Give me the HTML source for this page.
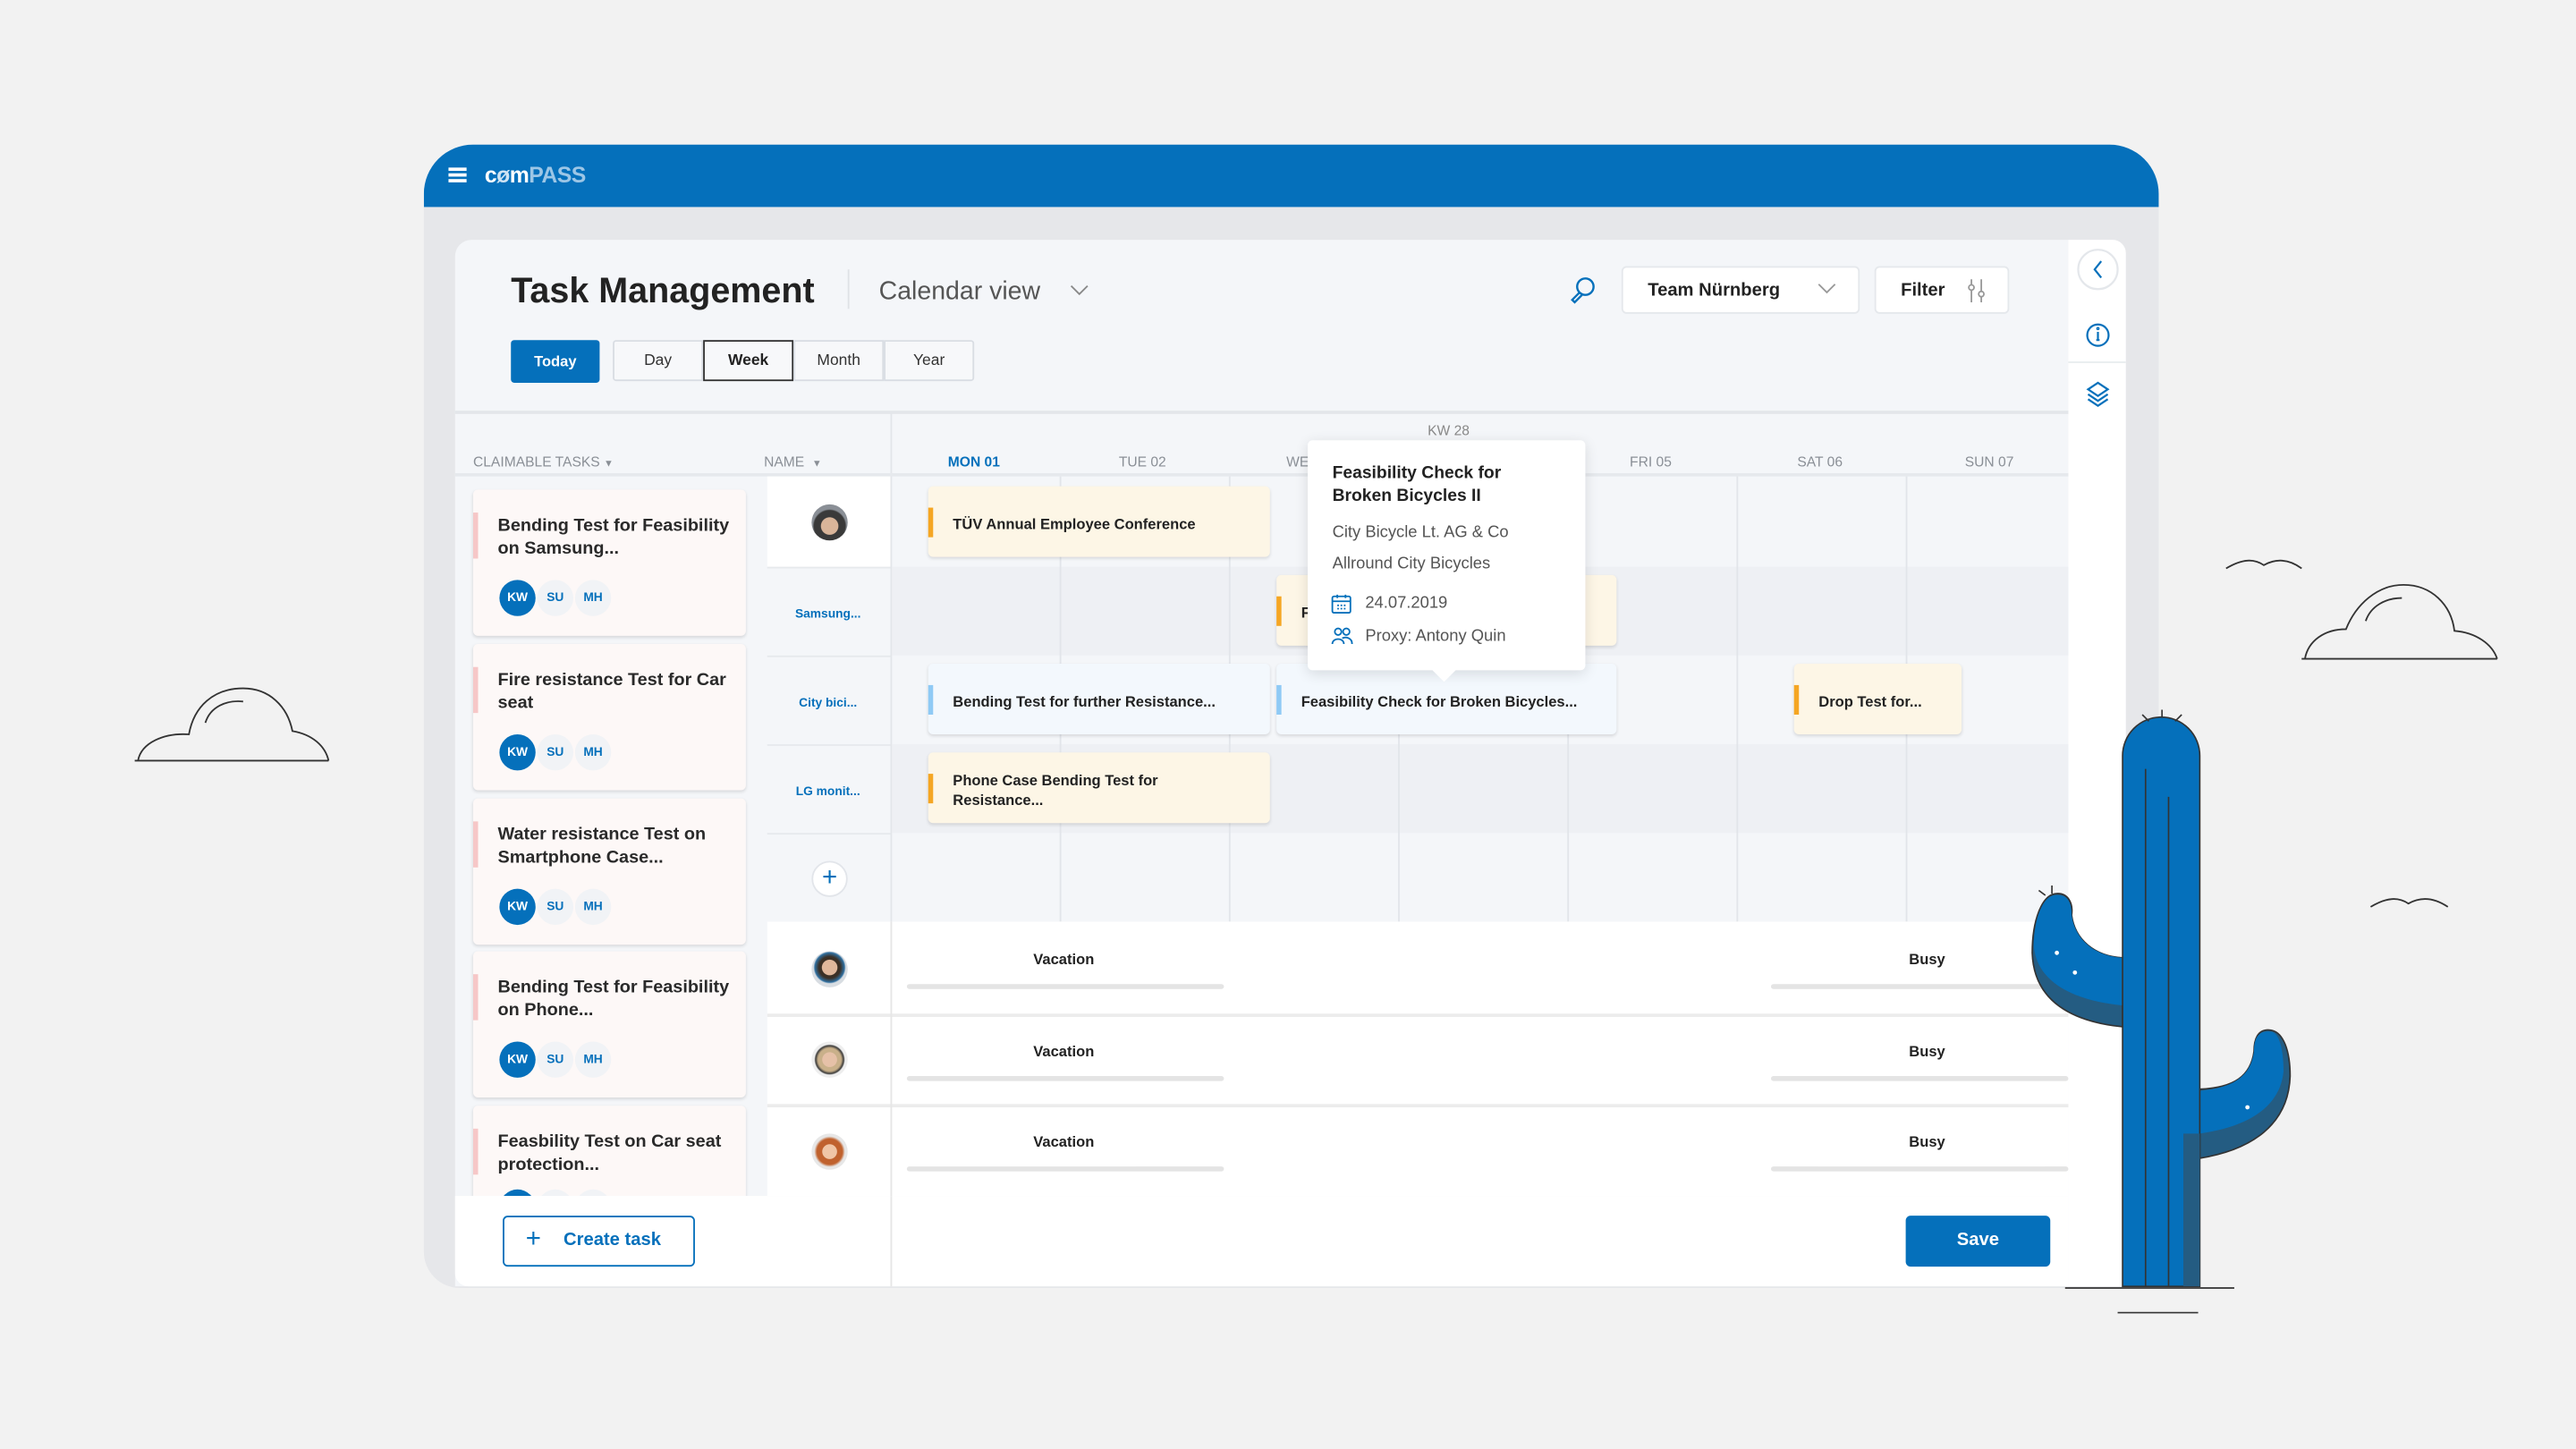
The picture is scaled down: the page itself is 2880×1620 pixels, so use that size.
<!DOCTYPE html>
<html><head><meta charset="utf-8"><style>
*{margin:0;padding:0;box-sizing:border-box}
html,body{width:2880px;height:1620px;overflow:hidden;background:#f2f2f2;font-family:"Liberation Sans",Arial,sans-serif}
#w{position:absolute;left:0;top:0;width:1568px;height:882px;transform:scale(1.836735);transform-origin:0 0}
.a{position:absolute}
.frame{left:258px;top:88px;width:1056px;height:696px;background:#e6e7ea;border-radius:30px 30px 0 22px;overflow:hidden}
.bar{left:0;top:0;width:1056px;height:38px;background:#0570bb}
.panel{left:277px;top:146px;width:982px;height:637px;background:#f4f6f9;border-radius:10px 0 0 0}
.side{left:1259px;top:146px;width:35px;height:637px;background:#fff;border-radius:0 8px 0 0}
.btn{border:1px solid #d9dde3;background:#f7f8fa;font-size:9.5px;color:#333;text-align:center;line-height:24px}
.box{background:#fff;border:1px solid #e5e8ec;border-radius:3px;font-size:11px;font-weight:bold;color:#222}
.hdr{font-size:8.5px;color:#8a8f96;top:276px}
.card{left:288px;width:166px;height:89px;background:#fdf8f7;border-radius:3px;box-shadow:0 1px 2px rgba(0,0,0,.12)}
.card .pb{position:absolute;left:0;top:14px;width:3px;height:28px;background:#f6c7c7}
.card .t{position:absolute;left:15px;top:15px;width:148px;font-size:10.8px;line-height:14px;font-weight:bold;color:#2a2a2a}
.ch{position:absolute;top:55px;width:22px;height:22px;border-radius:50%;font-size:7.5px;font-weight:bold;text-align:center;line-height:22px;color:#0570bb;background:#f1f3f6}
.ch.k{background:#0570bb;color:#fff}
.nm{font-size:7.5px;font-weight:bold;color:#0570bb;text-align:center;left:466px;width:76px}
.ev{height:43px;border-radius:3px;box-shadow:0 1px 2px rgba(0,0,0,.12);font-size:9px;font-weight:bold;color:#222}
.ev.o{background:#fdf6e6}.ev.b{background:#f3f8fd}
.ev i{position:absolute;left:0;top:13px;width:3px;height:18px}
.ev.o i{background:#f5a623}.ev.b i{background:#8fcaf5}
.ev span{position:absolute;left:15px;top:18px;white-space:nowrap}
.av{width:22px;height:22px;border-radius:50%;left:494px}
.vl{position:absolute;top:290px;width:1px;height:271px;background:#e2e5ea}
.lab{font-size:9px;font-weight:bold;color:#222}
.gb{height:3px;background:#e4e4e4;border-radius:2px}
</style></head><body>
<div id="w">
<svg class="a" style="left:0;top:0" width="1568" height="882" fill="none" stroke="#333" stroke-width="1">
<path d="M82 463 H200 M84 463 C86 452 100 446 115 447 C118 430 130 419 148 419 C164 419 175 430 178 445 C190 447 198 454 200 463"/>
<path d="M125 440 C128 430 138 426 148 427"/>
<path d="M1401 401 H1520 M1403 401 C1405 390 1415 383 1428 383 C1434 368 1447 356 1463 356 C1480 356 1492 368 1494 384 C1507 385 1517 392 1520 401"/>
<path d="M1440 378 C1443 369 1452 364 1462 364"/>
<path d="M1355 346 C1365 340 1372 340 1378 344 C1385 340 1393 340 1401 346"/>
<path d="M1443 552 C1453 546 1460 546 1466 550 C1473 546 1481 546 1490 552"/>
</svg>
<div class="a frame">
 <div class="a bar"></div>
 <div class="a" style="left:15px;top:14px;width:11px;height:1.5px;background:#fff;box-shadow:0 3.5px 0 #fff,0 7px 0 #fff"></div>
 <div class="a" style="left:37px;top:11px;font-size:13.5px;font-weight:bold;color:#fff;letter-spacing:-.3px">c<span style="color:#cfe3f3">ø</span>m<span style="color:#9cc6e6">PASS</span></div>
</div>
<div class="a panel"></div>
<div class="a side"></div>
<svg class="a" style="left:1259px;top:146px" width="35" height="120" fill="none" stroke="#0570bb" stroke-width="1.2">
<circle cx="18" cy="18" r="12" stroke="#e4e7eb" fill="#fff"/>
<path d="M20 13 L16 18 L20 23"/>
<circle cx="18" cy="58" r="6.5"/><path d="M18 56 V61 M17 61 H19"/><circle cx="18" cy="54" r=".4"/>
<path d="M12 91 L18 87 L24 91 L18 95 Z M12 94 L18 98 L24 94 M12 97 L18 101 L24 97"/>
</svg>
<div class="a" style="left:1259px;top:220px;width:35px;height:1px;background:#e9ecef"></div>
<div class="a" style="left:311px;top:165px;font-size:21.5px;font-weight:bold;color:#222">Task Management</div>
<div class="a" style="left:516px;top:164px;width:1px;height:24px;background:#dfe2e6"></div>
<div class="a" style="left:535px;top:169px;font-size:15.5px;color:#555">Calendar view</div>
<svg class="a" style="left:650px;top:172px" width="14" height="10" fill="none" stroke="#888"><path d="M2 2 L7 7 L12 2"/></svg>
<div class="a" style="left:311px;top:207px;width:54px;height:26px;background:#0570bb;border-radius:2px;color:#fff;font-size:9px;font-weight:bold;text-align:center;line-height:26px">Today</div>
<div class="a btn" style="left:373px;top:207px;width:55px;height:25px;border-radius:2px 0 0 2px">Day</div>
<div class="a btn" style="left:428px;top:207px;width:55px;height:25px;border:1.2px solid #333;font-weight:bold;color:#222">Week</div>
<div class="a btn" style="left:483px;top:207px;width:55px;height:25px">Month</div>
<div class="a btn" style="left:538px;top:207px;width:55px;height:25px;border-radius:0 2px 2px 0">Year</div>
<svg class="a" style="left:954px;top:167px" width="18" height="18" fill="none" stroke="#0570bb" stroke-width="1.3"><circle cx="11" cy="7.5" r="5"/><path d="M7.5 11 L3 15.5 L4.5 17 L9 12.5"/></svg>
<div class="a box" style="left:987px;top:162px;width:145px;height:29px;line-height:29px;padding-left:15px">Team Nürnberg</div>
<svg class="a" style="left:1105px;top:171px" width="14" height="10" fill="none" stroke="#999"><path d="M2 2 L7 7 L12 2"/></svg>
<div class="a box" style="left:1141px;top:162px;width:82px;height:29px;line-height:29px;padding-left:15px">Filter</div>
<svg class="a" style="left:1197px;top:169px" width="12" height="16" fill="none" stroke="#999"><path d="M3 1 V15 M9 1 V15"/><circle cx="3" cy="6" r="1.6" fill="#fff"/><circle cx="9" cy="10" r="1.6" fill="#fff"/></svg>
<div class="a" style="left:277px;top:250px;width:982px;height:1.5px;background:#e3e6ea"></div>
<div class="a hdr" style="left:288px">CLAIMABLE TASKS <span style="font-size:6px">▼</span></div>
<div class="a hdr" style="left:465px">NAME &nbsp;<span style="font-size:6px">▼</span></div>
<div class="a" style="left:542px;top:251px;width:1px;height:532px;background:#e3e6ea"></div>
<div class="a" style="left:869px;top:257px;font-size:8.5px;color:#888">KW 28</div>
<div class="a hdr" style="left:577px;color:#0570bb;font-weight:bold">MON 01</div>
<div class="a hdr" style="left:681px">TUE 02</div>
<div class="a hdr" style="left:783px">WE</div>
<div class="a hdr" style="left:992px">FRI 05</div>
<div class="a hdr" style="left:1094px">SAT 06</div>
<div class="a hdr" style="left:1196px">SUN 07</div>
<div class="a" style="left:277px;top:288px;width:982px;height:2px;background:#e6e9ed"></div>
<div class="a" style="left:543px;top:345px;width:716px;height:54px;background:#eef0f4"></div>
<div class="a" style="left:543px;top:453px;width:716px;height:54px;background:#eef0f4"></div>
<div class="vl" style="left:645px"></div><div class="vl" style="left:748px"></div><div class="vl" style="left:851px"></div><div class="vl" style="left:954px"></div><div class="vl" style="left:1057px"></div><div class="vl" style="left:1160px"></div>
<div class="a" style="left:467px;top:290px;width:75px;height:55px;background:#fff"></div>
<div class="a" style="left:467px;top:345px;width:75px;height:1px;background:#e6e9ed"></div>
<div class="a" style="left:467px;top:399px;width:75px;height:1px;background:#e6e9ed"></div>
<div class="a" style="left:467px;top:453px;width:75px;height:1px;background:#e6e9ed"></div>
<div class="a" style="left:467px;top:507px;width:75px;height:1px;background:#e6e9ed"></div>
<div class="a av" style="top:307px;background:radial-gradient(circle at 50% 60%,#d9b59a 0 30%,#3a3a3a 32% 55%,#8a8f96 60%)"></div>
<div class="a nm" style="top:369px">Samsung...</div>
<div class="a nm" style="top:423px">City bici...</div>
<div class="a nm" style="top:477px">LG monit...</div>
<div class="a" style="left:494px;top:524px;width:22px;height:22px;border-radius:50%;background:#fff;border:1px solid #e2e5ea;color:#0570bb;font-size:16px;line-height:19px;text-align:center">+</div>
<div class="a" style="left:467px;top:561px;width:792px;height:167px;background:#fff"></div>
<div class="a" style="left:467px;top:617px;width:792px;height:1.5px;background:#ececec"></div>
<div class="a" style="left:467px;top:672px;width:792px;height:1.5px;background:#ececec"></div>
<div class="a" style="left:542px;top:561px;width:1px;height:222px;background:#e6e6e6"></div>
<div class="a av" style="top:579px;background:radial-gradient(circle at 50% 45%,#e0b89c 0 28%,#3b3026 30% 40%,#2f6fa0 55%,#d8dde2 60%)"></div>
<div class="a av" style="top:634px;background:radial-gradient(circle at 50% 50%,#e6c1a8 0 28%,#c9b08a 30% 45%,#3a3a3a 55%,#eee 60%)"></div>
<div class="a av" style="top:690px;background:radial-gradient(circle at 50% 50%,#f0c6a6 0 28%,#c0622e 30% 50%,#e7e7e7 60%)"></div>
<div class="a lab" style="left:629px;top:579px">Vacation</div>
<div class="a lab" style="left:629px;top:635px">Vacation</div>
<div class="a lab" style="left:629px;top:690px">Vacation</div>
<div class="a lab" style="left:1162px;top:579px">Busy</div>
<div class="a lab" style="left:1162px;top:635px">Busy</div>
<div class="a lab" style="left:1162px;top:690px">Busy</div>
<div class="a gb" style="left:552px;top:599px;width:193px"></div>
<div class="a gb" style="left:552px;top:655px;width:193px"></div>
<div class="a gb" style="left:552px;top:710px;width:193px"></div>
<div class="a gb" style="left:1078px;top:599px;width:181px"></div>
<div class="a gb" style="left:1078px;top:655px;width:181px"></div>
<div class="a gb" style="left:1078px;top:710px;width:181px"></div>
<div class="a" style="left:277px;top:290px;width:190px;height:438px;overflow:hidden">
<div class="card a" style="left:11px;top:8px"><i class="pb"></i><div class="t">Bending Test for Feasibility on Samsung...</div><b class="ch k" style="left:16px">KW</b><b class="ch" style="left:39px">SU</b><b class="ch" style="left:62px">MH</b></div>
<div class="card a" style="left:11px;top:102px"><i class="pb"></i><div class="t">Fire resistance Test for Car seat</div><b class="ch k" style="left:16px">KW</b><b class="ch" style="left:39px">SU</b><b class="ch" style="left:62px">MH</b></div>
<div class="card a" style="left:11px;top:196px"><i class="pb"></i><div class="t">Water resistance Test on Smartphone Case...</div><b class="ch k" style="left:16px">KW</b><b class="ch" style="left:39px">SU</b><b class="ch" style="left:62px">MH</b></div>
<div class="card a" style="left:11px;top:289px"><i class="pb"></i><div class="t">Bending Test for Feasibility on Phone...</div><b class="ch k" style="left:16px">KW</b><b class="ch" style="left:39px">SU</b><b class="ch" style="left:62px">MH</b></div>
<div class="card a" style="left:11px;top:383px"><i class="pb"></i><div class="t">Feasbility Test on Car seat protection...</div><b class="ch k" style="left:16px;top:51px">KW</b><b class="ch" style="left:39px;top:51px">SU</b><b class="ch" style="left:62px;top:51px">MH</b></div>
</div>
<div class="a ev o" style="left:565px;top:296px;width:208px"><i></i><span>TÜV Annual Employee Conference</span></div>
<div class="a ev o" style="left:777px;top:350px;width:207px"><i></i><span>F</span></div>
<div class="a ev b" style="left:565px;top:404px;width:208px"><i></i><span>Bending Test for further Resistance...</span></div>
<div class="a ev b" style="left:777px;top:404px;width:207px"><i></i><span>Feasibility Check for Broken Bicycles...</span></div>
<div class="a ev o" style="left:1092px;top:404px;width:102px"><i></i><span>Drop Test for...</span></div>
<div class="a ev o" style="left:565px;top:458px;width:208px"><i></i><span style="top:11px;line-height:12px">Phone Case Bending Test for<br>Resistance...</span></div>
<div class="a" style="left:796px;top:268px;width:169px;height:140px;background:#fff;border-radius:3px;box-shadow:0 2px 8px rgba(0,0,0,.12)">
 <div class="a" style="left:78px;top:135px;width:10px;height:10px;background:#fff;transform:rotate(45deg)"></div>
 <div class="a" style="left:15px;top:13px;font-size:10.5px;font-weight:bold;color:#222;line-height:14px">Feasibility Check for<br>Broken Bicycles II</div>
 <div class="a" style="left:15px;top:51px;font-size:10px;color:#555">City Bicycle Lt. AG &amp; Co</div>
 <div class="a" style="left:15px;top:70px;font-size:10px;color:#555">Allround City Bicycles</div>
 <svg class="a" style="left:14px;top:93px" width="13" height="13" fill="none" stroke="#0570bb"><rect x="1" y="2" width="11" height="10" rx="1"/><path d="M1 5 H12 M4 1 V3 M9 1 V3"/><path d="M4 7.5h1M6 7.5h1M8 7.5h1M4 9.5h1M6 9.5h1M8 9.5h1" /></svg>
 <div class="a" style="left:35px;top:94px;font-size:10px;color:#555">24.07.2019</div>
 <svg class="a" style="left:14px;top:113px" width="14" height="12" fill="none" stroke="#0570bb"><circle cx="4.5" cy="3.5" r="2"/><circle cx="9.5" cy="3.5" r="2"/><path d="M1 11 C1 7 8 7 8 11 M7 7.5 C9 6.5 13 7 13 11"/></svg>
 <div class="a" style="left:35px;top:114px;font-size:10px;color:#555">Proxy: Antony Quin</div>
</div>
<div class="a" style="left:277px;top:728px;width:982px;height:55px;background:#fff;border-radius:0 0 0 8px"></div>
<div class="a" style="left:542px;top:728px;width:1px;height:55px;background:#e6e6e6"></div>
<div class="a" style="left:306px;top:740px;width:117px;height:31px;border:1.3px solid #0570bb;border-radius:3px;color:#0570bb;font-size:11px;font-weight:bold;line-height:29px;padding-left:36px">Create task</div>
<div class="a" style="left:320px;top:746px;color:#0570bb;font-size:16px;line-height:18px">+</div>
<div class="a" style="left:1160px;top:740px;width:88px;height:31px;background:#0570bb;border-radius:3px;color:#fff;font-size:11px;font-weight:bold;text-align:center;line-height:31px">Save</div>
<!-- cactus -->
<svg class="a" style="left:0;top:0" width="1568" height="882" stroke="#333" stroke-width="0.9">
<path d="M1237 580 C1237 560 1243 545 1251 544 C1259 543 1262 550 1261 557 C1263 572 1275 582 1292 583 V625 C1262 622 1238 610 1237 580 Z" fill="#245c82"/>
<path d="M1238 576 C1238 558 1244 545 1251 545 C1259 544 1261 550 1261 557 C1263 572 1275 582 1292 583 V612 C1262 609 1240 598 1238 576 Z" fill="#0570bb" stroke="none"/>
<path d="M1394 655 C1394 640 1390 628 1382 627 C1374 626 1372 633 1372 640 C1370 655 1360 662 1339 663 V705 C1370 700 1393 685 1394 655 Z" fill="#245c82"/>
<path d="M1390 652 C1390 638 1387 628 1382 628 C1374 627 1372 633 1372 640 C1370 655 1360 662 1339 664 V690 C1368 686 1388 674 1390 652 Z" fill="#0570bb" stroke="none"/>
<path d="M1292 783 V460 A23.5 23.5 0 0 1 1339 460 V783 Z" fill="#0570bb"/>
<path d="M1329 690 V783 H1339 V690 Z" fill="#245c82" stroke="none"/>
<path d="M1306 468 V783 M1320 485 V783" fill="none"/>
<path d="M1316 437 V432 M1308 439 L1304 435 M1324 439 L1328 435 M1249 544 V539 M1245 545 L1241 542" fill="none"/>
<path d="M1257 784 H1360 M1289 799 H1338" fill="none"/>
<circle cx="1252" cy="580" r="1.3" fill="#fff" stroke="none"/><circle cx="1263" cy="592" r="1.3" fill="#fff" stroke="none"/><circle cx="1368" cy="674" r="1.3" fill="#fff" stroke="none"/>
</svg>
</div>
</body></html>
